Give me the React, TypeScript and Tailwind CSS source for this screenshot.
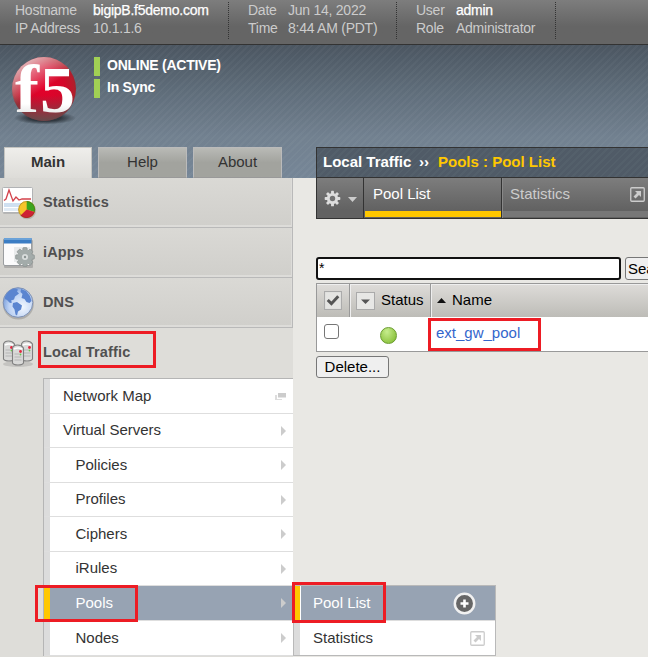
import React from "react";

const stripes =
  "bg-[repeating-linear-gradient(135deg,rgba(255,255,255,0.03)_0px,rgba(255,255,255,0.03)_2px,transparent_2px,transparent_5px),linear-gradient(to_bottom,#4b5661,#5f6d7a_35%,#728190_70%,#768697)]";

function Logo() {
  return (
    <svg width="72" height="76" viewBox="8 52 72 76" className="block">
      <defs>
        <radialGradient id="ball" cx="0.5" cy="0.48" r="0.54">
          <stop offset="0" stopColor="#e4002b" />
          <stop offset="0.6" stopColor="#d3082a" />
          <stop offset="0.86" stopColor="#b51d2b" />
          <stop offset="1" stopColor="#8d2a30" />
        </radialGradient>
        <linearGradient id="gloss" x1="0.2" y1="0" x2="0.5" y2="0.5">
          <stop offset="0" stopColor="#fff" stopOpacity="0.75" />
          <stop offset="1" stopColor="#fff" stopOpacity="0" />
        </linearGradient>
        <linearGradient id="base" x1="0" y1="0.6" x2="0" y2="1">
          <stop offset="0" stopColor="#555" stopOpacity="0" />
          <stop offset="1" stopColor="#555" stopOpacity="0.75" />
        </linearGradient>
        <linearGradient id="letters" x1="0" y1="0" x2="0" y2="1">
          <stop offset="0" stopColor="#fff" />
          <stop offset="0.7" stopColor="#fff" />
          <stop offset="1" stopColor="#ccc" />
        </linearGradient>
        <radialGradient id="shade">
          <stop offset="0.5" stopColor="#20262c" stopOpacity="0.8" />
          <stop offset="1" stopColor="#20262c" stopOpacity="0" />
        </radialGradient>
      </defs>
      <ellipse cx="45" cy="118" rx="31" ry="6.5" fill="url(#shade)" />
      <circle cx="44" cy="89" r="32" fill="url(#ball)" />
      <circle cx="44" cy="89" r="32" fill="url(#gloss)" />
      <circle cx="44" cy="89" r="32" fill="url(#base)" />
      <g fill="url(#letters)" fontFamily="Liberation Serif, serif" fontWeight="700">
        <text x="15" y="112" fontSize="67" textLength="24" lengthAdjust="spacingAndGlyphs">f</text>
        <text x="40" y="112" fontSize="66" textLength="35" lengthAdjust="spacingAndGlyphs">5</text>
      </g>
    </svg>
  );
}

function StatsIcon() {
  return (
    <svg width="38" height="36" viewBox="0 0 38 36">
      <rect x="3" y="4" width="30" height="25" rx="1" fill="#888" opacity=".35" />
      <rect x="2.5" y="2.5" width="30" height="25" rx="1" fill="#fff" stroke="#b1b3b5" />
      <rect x="4" y="18" width="27" height="4" fill="#cfe0f1" />
      <rect x="4" y="23" width="27" height="3" fill="#e1ebf5" />
      <path d="M4 15.5L6 14l3-9 4 11 3-4 3 3 3-1h9" fill="none" stroke="#d3424b" strokeWidth="1.3" />
      <circle cx="27.3" cy="25.5" r="8.8" fill="#777" opacity=".35" />
      <circle cx="26.7" cy="24.5" r="8.5" fill="#f6c52a" />
      <path d="M26.7 24.5V16a8.5 8.5 0 0 1 8 11z" fill="#3ca51d" />
      <path d="M26.7 24.5l8 2.5a8.5 8.5 0 0 1-14.2 3.5z" fill="#ce2136" />
      <circle cx="26.7" cy="24.5" r="8" fill="none" stroke="#604516" strokeOpacity=".35" />
    </svg>
  );
}

function Gear({ size, color, hole }: { size: number; color: string; hole: string }) {
  return (
    <svg width={size} height={size} viewBox="-10 -10 20 20">
      <g fill={color}>
        {[0, 45, 90, 135].map((angle) => (
          <rect key={angle} x="-1.7" y="-9.2" width="3.4" height="18.4" rx="0.8" transform={`rotate(${angle})`} />
        ))}
        <circle r="6.6" />
      </g>
      <circle r="3.2" fill={hole} />
    </svg>
  );
}

function AppsIcon() {
  return (
    <svg width="38" height="36" viewBox="0 0 38 36">
      <rect x="4" y="5" width="29" height="28" rx="1" fill="#777" opacity=".4" />
      <rect x="3.5" y="3.5" width="28" height="27" rx="1.5" fill="#fbfbfc" stroke="#9a9da0" />
      <rect x="4" y="3" width="27.5" height="5.5" fill="#3b7dc4" />
      <rect x="4" y="3" width="27.5" height="2" fill="#6ba2d8" />
      <path d="M14 12h16v15H14z" fill="#e9ebec" />
      <g transform="translate(25 22)" fill="#a3abaa">
        {[0, 45, 90, 135].map((a) => (
          <rect key={a} x="-2.2" y="-9.4" width="4.4" height="18.800" rx="1" stroke="#838b8a" strokeWidth=".6" transform={`rotate(${a})`} />
        ))}
        <circle r="7.3" />
        <circle r="3" fill="#d9dddd" />
        <circle r="1.2" fill="#8b9392" />
      </g>
    </svg>
  );
}

function GlobeIcon() {
  return (
    <svg width="38" height="36" viewBox="0 0 38 36">
      <defs>
        <radialGradient id="sea" cx=".65" cy=".65" r=".65">
          <stop offset="0" stopColor="#f2f7fe" />
          <stop offset=".7" stopColor="#bdd2f4" />
          <stop offset="1" stopColor="#86a8e0" />
        </radialGradient>
      </defs>
      <circle cx="18.3" cy="19" r="15.5" fill="#777" opacity=".4" />
      <circle cx="18" cy="17.5" r="14.8" fill="url(#sea)" stroke="#7e91b5" />
      <g fill="#5b85d0">
        <path d="M5 12c2-5 6-8 10-8.500l3 1-1 2 2 2-4 3-1 3-3 1 1 2-2 .5-3-3-2-1z" />
        <path d="M13 18l4-1 5 3.500-1 4-3 2-1 4-1.500-1-1-5-2-3z" />
        <path d="M21 4l5 2 4 5 1.500 5-2 2-3-1-2-3-3-1 1-4-2-2z" />
      </g>
    </svg>
  );
}

function ServersIcon() {
  const server = (x: number, y: number) => (
    <g transform={`translate(${x} ${y})`}>
      <path d="M0 3Q1 0 5 0t6 3v15q-1 2-5.500 2T0 18z" fill="#d9d9d8" stroke="#808080" strokeWidth="1.1" />
      <path d="M1.500 4Q5.500 2 9.500 4" stroke="#fff" fill="none" strokeWidth="1.5" />
      <path d="M2 9h5M2 12h7M2 15h7" stroke="#b5b5b5" />
      <circle cx="8" cy="6.500" r="1.400" fill="#e22840" />
      <circle cx="8" cy="9.500" r=".9" fill="#68c450" />
    </g>
  );
  return (
    <svg width="38" height="36" viewBox="0 0 38 36">
      <ellipse cx="18" cy="28" rx="15" ry="3" fill="#777" opacity=".25" />
      {server(3.500, 5)}
      {server(21.500, 5)}
      {server(12.500, 9)}
    </svg>
  );
}

function OutIcon({ color, size }: { color: string; size: number }) {
  return (
    <svg width={size} height={size} viewBox="0 0 15 15" className="block shrink-0">
      <rect x=".75" y=".75" width="13.500" height="13.500" rx="1" fill="none" stroke={color} strokeWidth="1.300" />
      <path d="M5 4h6v6L9 8l-3.500 3.500-2-2L7 6z" fill={color} />
    </svg>
  );
}

function InfoGroup({ rows, label, className }: { rows: [string, string, boolean][]; label: string; className: string }) {
  return (
    <div className={`mt-[2px] h-[37px] border-r border-dotted border-[#333] ${className}`}>
      {rows.map(([name, value, strong]) => (
        <div key={name} className="flex h-[18px] leading-[17px]">
          <span className={`shrink-0 ${label}`}>{name}</span>
          <span className={strong ? "text-white [-webkit-text-stroke:0.25px_white]" : ""}>{value}</span>
        </div>
      ))}
    </div>
  );
}

function Section({ icon, name, open }: { icon: React.ReactNode; name: string; open?: boolean }) {
  return (
    <div
      className={`flex h-[50px] items-center ${
        open ? "" : "border-r border-b border-[#b9b9b9] bg-linear-to-b from-[#dad9d5] to-[#d0cfcb] shadow-[inset_-1px_-2px_0_#dddcd9]"
      }`}
    >
      <div className="w-[43px] shrink-0 pt-px">{icon}</div>
      <span className={`text-[14.5px] font-bold tracking-[0.15px] text-[#505050] ${open ? "" : "pt-px"}`}>{name}</span>
    </div>
  );
}

function MenuItem({ name, height, sub, active, map }: { name: string; height: string; sub?: boolean; active?: boolean; map?: boolean }) {
  return (
    <div className={`flex ${height} border-b border-[#dedede] text-[15px] ${active ? "bg-[#97a3b3] text-white" : "bg-white text-[#333]"}`}>
      <div className={`w-[6px] shrink-0 ${active ? "bg-[#ffc800]" : "bg-[#dcdcdc]"}`} />
      <div className={`flex flex-1 items-center justify-between pr-[7px] ${sub ? "pl-[25.5px]" : "pl-[13px]"}`}>
        <span className="pb-[2px] leading-none">{name}</span>
        {map ? (
          <svg width="11" height="9" viewBox="0 0 11 9">
            <path d="M0 3h2v4h5v1H0z" fill="#ddd" />
            <rect x="3" y="1" width="8" height="4.500" fill="#ccc" />
          </svg>
        ) : (
          <svg width="5" height="10" viewBox="0 0 5 10">
            <path d="M0 0l5 5-5 5z" fill="#ccc" />
          </svg>
        )}
      </div>
    </div>
  );
}

export default function App() {
  return (
    <div className="relative flex h-[657px] w-[648px] flex-col overflow-hidden bg-[#e9e8e4] font-['Liberation_Sans',Arial,sans-serif]">
      <header className="flex h-[45px] shrink-0 border-b border-[#333] bg-linear-to-b from-[#7d7d7d] to-[#656565] to-60% text-[14px] tracking-[-0.25px] text-[#ccc]">
        <InfoGroup className="w-[229px] pl-[15px]" label="w-[78px]" rows={[["Hostname", "bigipB.f5demo.com", true], ["IP Address", "10.1.1.6", false]]} />
        <InfoGroup className="w-[168px] pl-[19px]" label="w-[40px]" rows={[["Date", "Jun 14, 2022", false], ["Time", "8:44 AM (PDT)", false]]} />
        <InfoGroup className="w-[159px] pl-[19px]" label="w-[40px]" rows={[["User", "admin", true], ["Role", "Administrator", false]]} />
      </header>

      <div className={`flex h-[133px] shrink-0 flex-col justify-between ${stripes}`}>
        <div className="flex pt-[7px] pl-[8px]">
          <Logo />
          <div className="ml-[14px] flex flex-col gap-[3px] pt-[5px] text-[14px] font-bold tracking-[-0.25px] text-white">
            <div className="h-[19px] border-l-6 border-[#a1d054] pl-[7px] leading-[17px]">ONLINE (ACTIVE)</div>
            <div className="h-[19px] border-l-6 border-[#a1d054] pl-[7px] leading-[17px]">In Sync</div>
          </div>
        </div>
        <div className="flex h-[31px] shrink-0 text-[15px] leading-[28px] text-[#333]">
          <div className="flex w-[316px] gap-[6px] pl-[4px] text-center">
            <div className="w-[88px] border border-b-0 border-[#c4c4c0] bg-linear-to-b from-[#efeeeb] to-[#dddcd8] font-bold">Main</div>
            <div className="w-[89px] border border-[#bbb] border-b-[#999] bg-linear-to-b from-[#b9bab6] to-[#a2a39e] to-50%">Help</div>
            <div className="w-[89px] border border-[#bbb] border-b-[#999] bg-linear-to-b from-[#b9bab6] to-[#a2a39e] to-50%">About</div>
          </div>
          <div className="flex flex-1 border border-r-0 border-[#333] bg-[repeating-linear-gradient(135deg,#54606b_0px,#54606b_2px,#505b67_2px,#505b67_5px)] pl-[6px] text-[15px] font-bold text-white">
            <span className="w-[96px]">Local Traffic</span>
            <span className="w-[19px]">››</span>
            <span className="text-[#ffc800]">Pools : Pool List</span>
          </div>
        </div>
      </div>

      <div className="flex flex-1">
        <nav className="w-[293px] shrink-0 bg-[#deddd9]">
          <Section icon={<StatsIcon />} name="Statistics" />
          <Section icon={<AppsIcon />} name="iApps" />
          <Section icon={<GlobeIcon />} name="DNS" />
          <Section icon={<ServersIcon />} name="Local Traffic" open />
          <div className="ml-[43px] border-t border-l border-[#b5b5b5]">
            <MenuItem name="Network Map" height="h-[35px]" map />
            <MenuItem name="Virtual Servers" height="h-[34px]" />
            <MenuItem name="Policies" height="h-[35px]" sub />
            <MenuItem name="Profiles" height="h-[34px]" sub />
            <MenuItem name="Ciphers" height="h-[35px]" sub />
            <MenuItem name="iRules" height="h-[34px]" sub />
            <MenuItem name="Pools" height="h-[35px]" sub active />
            <MenuItem name="Nodes" height="h-[35px]" sub />
          </div>
        </nav>

        <main className="min-w-0 flex-1 pl-[23px] text-[15px]">
          <div className="flex h-[41px] border-b border-l border-[#333] bg-linear-to-b from-[#7d7d7d] to-[#626262] to-80%">
            <div className="flex w-[47px] items-center border-r border-[#333] pl-[7px]">
              <Gear size={17} color="#ddd" hole="#737373" />
              <svg width="9" height="5" viewBox="0 0 9 5" className="mt-[2px] ml-[7px]">
                <path d="M0 0h9L4.500 5z" fill="#ccc" />
              </svg>
            </div>
            <div className="flex w-[138px] flex-col justify-between border-r border-[#333] pl-px">
              <span className="pl-[8px] leading-[32px] text-white">Pool List</span>
              <span className="mb-px h-[6px] bg-[#ffc800]" />
            </div>
            <div className="flex flex-1 flex-col justify-between border-l border-[#888]">
              <div className="flex items-start justify-between pr-[3px] pl-[7px] leading-[32px] text-[#ccc]">
                Statistics
                <span className="pt-[9px]"><OutIcon size={15} color="#ccc" /></span>
              </div>
              <span className="mb-px h-[6px] bg-[#777]" />
            </div>
          </div>

          <div className="mt-[38px] flex gap-[4px] overflow-hidden">
            <input defaultValue="*" className="h-[23px] w-[305px] shrink-0 rounded-[3px] border-2 border-[#111] bg-white px-px pb-[2px] text-[14px]" />
            <button className="w-[60px] shrink-0 rounded-[3px] border border-[#777] bg-[#efefef] pl-[2px] text-left leading-[20px]">Search</button>
          </div>

          <div className="mt-[3px] h-[69px] border-y border-l border-[#999] bg-white">
            <div className="flex h-[33px] items-center bg-linear-to-b from-[#dedcd9] to-[#bdbcb7] shadow-[inset_0_1px_0_#eee]">
              <div className="flex h-full w-[33px] items-center border-r border-[#999] pl-[7px]">
                <svg width="18" height="19" viewBox="0 0 17 18">
                  <rect x=".5" y=".5" width="16" height="17" fill="#e4e4e2" stroke="#aaa" />
                  <path d="M3.500 8.500l3.500 3.500L13.500 5" fill="none" stroke="#555" strokeWidth="2.800" />
                </svg>
              </div>
              <div className="flex h-full w-[81px] items-center border-r border-l border-r-[#999] border-l-[#eee] pl-[5px]">
                <svg width="19" height="18" viewBox="0 0 19 18">
                  <rect x=".5" y=".5" width="18" height="17" fill="#e7e7e5" stroke="#aaa" />
                  <path d="M5 7.500h9L9.500 12z" fill="#555" />
                </svg>
                <span className="pl-[6px]">Status</span>
              </div>
              <div className="flex h-full flex-1 items-center border-l border-[#eee] pl-[5px]">
                <svg width="9" height="5" viewBox="0 0 9 5"><path d="M0 5h9L4.500 0z" fill="#111" /></svg>
                <span className="pl-[6px]">Name</span>
              </div>
            </div>
            <div className="flex h-[34px] pt-[7px]">
              <div className="ml-[7px] h-[15px] w-[15px] rounded-[3px] border border-[#767676]" />
              <div className="mt-[3px] ml-[41px] h-[17px] w-[17px] rounded-full border border-[#6a9c30] bg-radial-[at_40%_25%] from-[#c7ed8e] to-[#7cb728]" />
              <span className="ml-[39px] leading-[18px] text-[#3366cc]">ext_gw_pool</span>
            </div>
          </div>
          <button className="mt-[4px] flex h-[22px] w-[73px] items-center justify-center rounded-[3px] border border-[#777] bg-[#efefef]">Delete...</button>
        </main>
      </div>

      <div className="absolute top-[585px] left-[293px] h-[71px] w-[203px] border border-[#b9b9b9] bg-white text-[15px]">
        <div className="flex h-[35px] border-b border-[#ddd]">
          <div className="w-[6px] bg-[#ffc800]" />
          <div className="ml-px flex flex-1 items-center bg-[#97a3b3] pr-[19px] pl-[12px] text-white">
            <span className="flex-1">Pool List</span>
            <svg width="23" height="23" viewBox="0 0 23 23">
              <circle cx="11.500" cy="11.500" r="9.700" fill="#666" stroke="#f1f1f1" strokeWidth="2.500" />
              <path d="M11.500 7.500v8M7.500 11.500h8" stroke="#fff" strokeWidth="2.600" />
            </svg>
          </div>
        </div>
        <div className="flex h-[34px]">
          <div className="w-[6px] bg-[#dcdcdc]" />
          <div className="flex flex-1 items-center justify-between pr-[10px] pl-[13px] text-[#333]">
            Statistics
            <OutIcon size={15} color="#ccc" />
          </div>
        </div>
      </div>

      <div className="absolute top-[331px] left-[38px] h-[37px] w-[118px] border-3 border-[#ed1c24]" />
      <div className="absolute top-[585px] left-[35px] h-[37px] w-[103px] border-3 border-[#ed1c24]" />
      <div className="absolute top-[582px] left-[292px] h-[41px] w-[94px] border-3 border-[#ed1c24]" />
      <div className="absolute top-[318px] left-[428px] h-[33px] w-[113px] border-3 border-[#ed1c24]" />
    </div>
  );
}
